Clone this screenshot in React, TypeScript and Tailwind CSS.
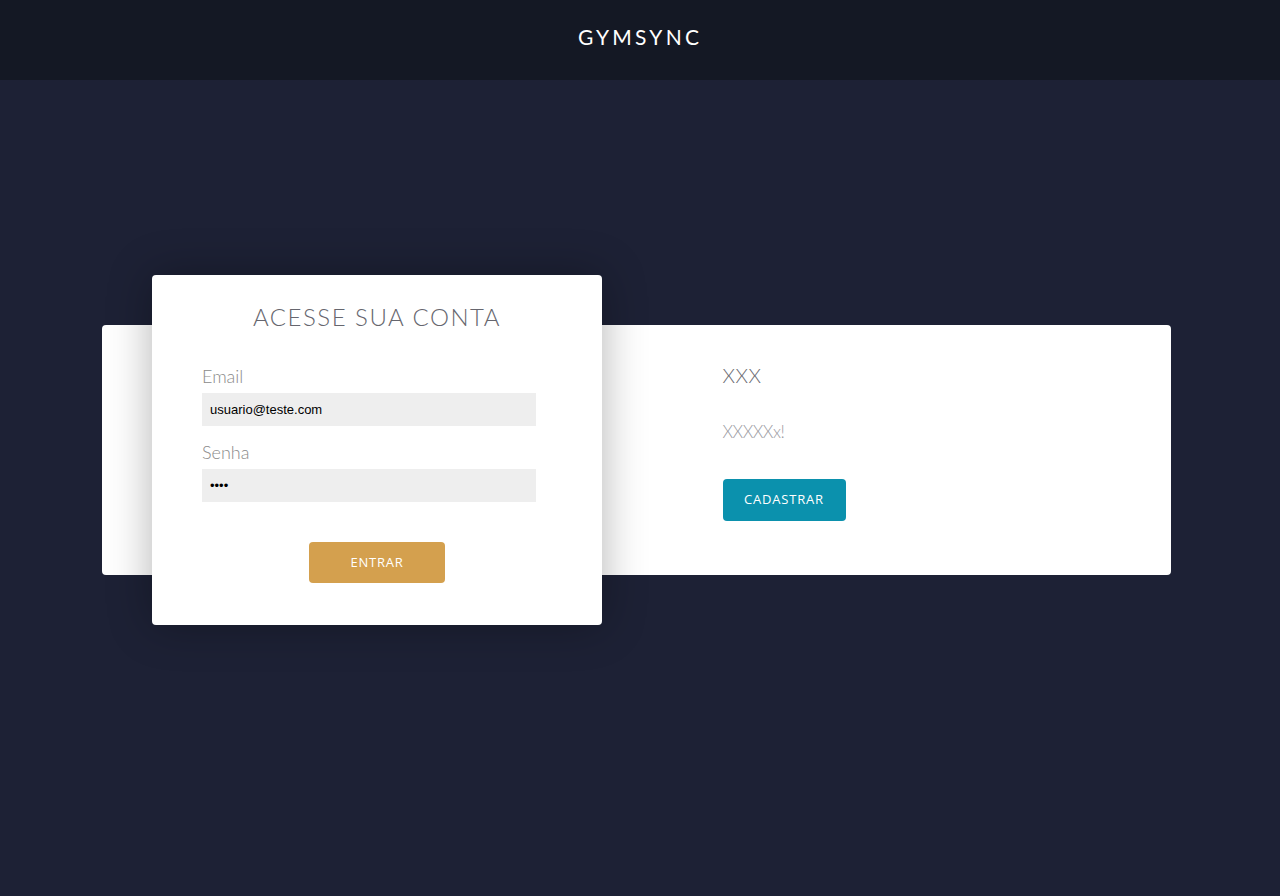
export default function App() {
  return (
    <div className="min-h-screen bg-[#1d2135] font-['Lato','Open_Sans',sans-serif]">
      {/* Header */}
      <header className="h-20 bg-[#141824] flex items-center justify-center pb-[6px]">
        <h1 className="text-white text-[21px] tracking-[3.2px] font-normal">GYMSYNC</h1>
      </header>

      <div className="px-[102px] pt-[245px]">
        <div className="relative h-[250px] w-[1069px] bg-white rounded flex">
          <div className="w-1/2" />
          <div className="w-1/2 pl-[86px] pt-10">
            <h2 className="text-[20px] text-[#6b6b73] font-light tracking-wide leading-none">XXX</h2>
            <p className="mt-[38px] text-[17px] text-[#9a9a9f] font-light leading-none tracking-[-0.5px]">XXXXXx!</p>
            <button className="mt-[39px] h-[42px] w-[123px] bg-[#0b91ad] text-white text-[13px] tracking-[0.8px] font-medium rounded-sm font-['Open_Sans',sans-serif]">
              CADASTRAR
            </button>
          </div>

          {/* Login card */}
          <div className="absolute left-[50px] -top-[50px] w-[450px] h-[350px] bg-white rounded shadow-[0_0_45px_rgba(0,0,0,0.3)] px-[50px] pt-[24px]">
            <h2 className="text-center text-[24px] text-[#66666e] font-light tracking-[1.5px]">ACESSE SUA CONTA</h2>
            <label className="block mt-[32px] text-[18px] text-[#8a8a8a] font-light leading-none">Email</label>
            <input
              type="text"
              defaultValue="usuario@teste.com"
              className="mt-[8px] block w-[334px] h-[33px] bg-[#eeeeee] px-2 text-[13px] text-black font-['Liberation_Sans',Arial,sans-serif] outline-none"
            />
            <label className="block mt-[17px] text-[18px] text-[#8a8a8a] font-light leading-none">Senha</label>
            <input
              type="password"
              defaultValue="1234"
              className="mt-[8px] block w-[334px] h-[33px] bg-[#eeeeee] px-2 text-[13px] text-black font-['Liberation_Sans',Arial,sans-serif] outline-none"
            />
            <div className="flex justify-center mt-[40px]">
              <button className="h-[41px] w-[136px] bg-[#d4a04e] text-white text-[13px] tracking-[0.8px] font-medium rounded-sm font-['Open_Sans',sans-serif]">
                ENTRAR
              </button>
            </div>
          </div>
        </div>
      </div>
    </div>
  );
}
